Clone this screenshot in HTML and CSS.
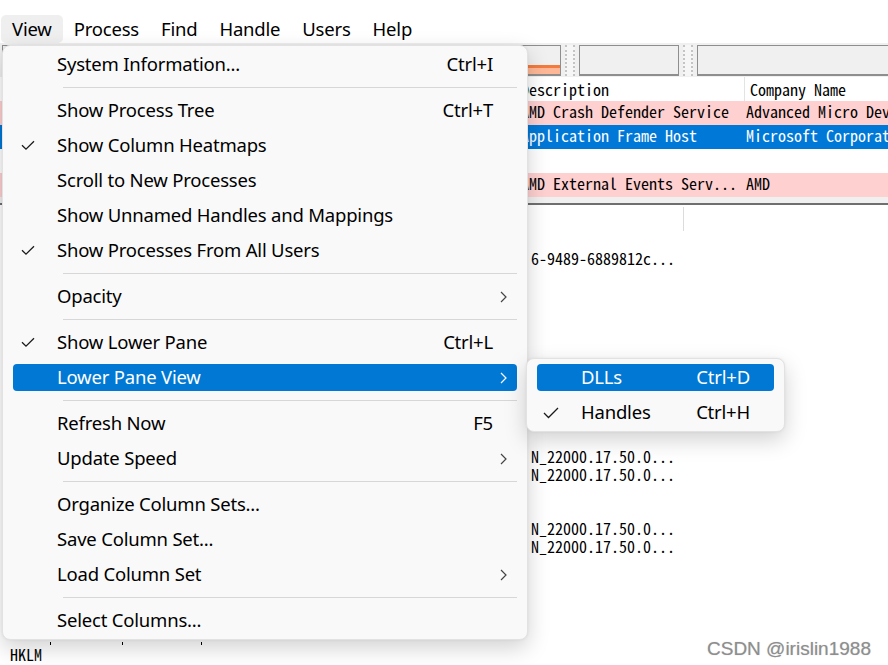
FILE: index.html
```html
<!DOCTYPE html>
<html>
<head>
<meta charset="utf-8">
<link rel="stylesheet" href="styles.css">
</head>
<body>
<div class="window">
  <nav class="menubar">
    <span class="mb-item active">View</span>
    <span class="mb-item">Process</span>
    <span class="mb-item">Find</span>
    <span class="mb-item">Handle</span>
    <span class="mb-item">Users</span>
    <span class="mb-item">Help</span>
  </nav>
  <div class="toolbar">
    <div class="tb-box tb-cpu"><div class="graph"></div></div>
    <div class="grip"><div class="grip-in"></div></div>
    <div class="tb-box tb-mid"></div>
    <div class="grip"><div class="grip-in"></div></div>
    <div class="tb-box tb-last"></div>
  </div>
  <div class="ptable">
    <div class="prow phead"><span></span><span class="c-desc">Description</span><span class="c-comp">Company Name</span></div>
    <div class="prow pink"><span></span><span class="c-desc">AMD Crash Defender Service</span><span class="c-comp">Advanced Micro Dev</span></div>
    <div class="prow sel"><span></span><span class="c-desc">Application Frame Host</span><span class="c-comp">Microsoft Corporat</span></div>
    <div class="prow"><span></span><span class="c-desc"></span><span class="c-comp"></span></div>
    <div class="prow pink"><span></span><span class="c-desc">AMD External Events Serv...</span><span class="c-comp">AMD</span></div>
  </div>
  <div class="splitter"></div>
  <div class="lower">
    <div class="lhead"><span class="lh-cell"></span><span></span></div>
    <div class="lrow"></div>
    <div class="lrow"><span class="ltext">6-9489-6889812c...</span></div>
    <div class="lrow"></div>
    <div class="lrow"></div>
    <div class="lrow"></div>
    <div class="lrow"></div>
    <div class="lrow"></div>
    <div class="lrow"></div>
    <div class="lrow"></div>
    <div class="lrow"></div>
    <div class="lrow"></div>
    <div class="lrow"></div>
    <div class="lrow"><span class="ltext">N_22000.17.50.0...</span></div>
    <div class="lrow"><span class="ltext">N_22000.17.50.0...</span></div>
    <div class="lrow"></div>
    <div class="lrow"></div>
    <div class="lrow"><span class="ltext">N_22000.17.50.0...</span></div>
    <div class="lrow"><span class="ltext">N_22000.17.50.0...</span></div>
    <div class="lrow"></div>
    <div class="lrow"></div>
    <div class="lrow"></div>
    <div class="lrow"></div>
    <div class="lrow ticks"><i class="t1"></i><i class="t2"></i><i class="t3"></i></div>
    <div class="lrow"><span class="key">HKLM</span></div>
  </div>
</div>

<div class="menu main-menu">
  <div class="mi"><div class="mi-in"><span class="ck"></span><span class="lbl">System Information...</span><span class="sc">Ctrl+I</span><span class="ar"></span></div></div>
  <div class="sep"></div>
  <div class="mi"><div class="mi-in"><span class="ck"></span><span class="lbl">Show Process Tree</span><span class="sc">Ctrl+T</span><span class="ar"></span></div></div>
  <div class="mi"><div class="mi-in"><span class="ck"><svg width="14" height="11" viewBox="0 0 14 11"><path d="M1 5.2 L5 9.2 L13 1.2" fill="none" stroke="#1a1a1a" stroke-width="1.3"/></svg></span><span class="lbl">Show Column Heatmaps</span><span class="sc"></span><span class="ar"></span></div></div>
  <div class="mi"><div class="mi-in"><span class="ck"></span><span class="lbl">Scroll to New Processes</span><span class="sc"></span><span class="ar"></span></div></div>
  <div class="mi"><div class="mi-in"><span class="ck"></span><span class="lbl">Show Unnamed Handles and Mappings</span><span class="sc"></span><span class="ar"></span></div></div>
  <div class="mi"><div class="mi-in"><span class="ck"><svg width="14" height="11" viewBox="0 0 14 11"><path d="M1 5.2 L5 9.2 L13 1.2" fill="none" stroke="#1a1a1a" stroke-width="1.3"/></svg></span><span class="lbl">Show Processes From All Users</span><span class="sc"></span><span class="ar"></span></div></div>
  <div class="sep"></div>
  <div class="mi"><div class="mi-in"><span class="ck"></span><span class="lbl">Opacity</span><span class="sc"></span><span class="ar"><svg width="7" height="12" viewBox="0 0 7 12"><path d="M1 1 L6 6 L1 11" fill="none" stroke="#444" stroke-width="1.2"/></svg></span></div></div>
  <div class="sep"></div>
  <div class="mi"><div class="mi-in"><span class="ck"><svg width="14" height="11" viewBox="0 0 14 11"><path d="M1 5.2 L5 9.2 L13 1.2" fill="none" stroke="#1a1a1a" stroke-width="1.3"/></svg></span><span class="lbl">Show Lower Pane</span><span class="sc">Ctrl+L</span><span class="ar"></span></div></div>
  <div class="mi hot"><div class="mi-in"><span class="ck"></span><span class="lbl">Lower Pane View</span><span class="sc"></span><span class="ar"><svg width="7" height="12" viewBox="0 0 7 12"><path d="M1 1 L6 6 L1 11" fill="none" stroke="#fff" stroke-width="1.2"/></svg></span></div></div>
  <div class="sep"></div>
  <div class="mi"><div class="mi-in"><span class="ck"></span><span class="lbl">Refresh Now</span><span class="sc">F5</span><span class="ar"></span></div></div>
  <div class="mi"><div class="mi-in"><span class="ck"></span><span class="lbl">Update Speed</span><span class="sc"></span><span class="ar"><svg width="7" height="12" viewBox="0 0 7 12"><path d="M1 1 L6 6 L1 11" fill="none" stroke="#444" stroke-width="1.2"/></svg></span></div></div>
  <div class="sep"></div>
  <div class="mi"><div class="mi-in"><span class="ck"></span><span class="lbl">Organize Column Sets...</span><span class="sc"></span><span class="ar"></span></div></div>
  <div class="mi"><div class="mi-in"><span class="ck"></span><span class="lbl">Save Column Set...</span><span class="sc"></span><span class="ar"></span></div></div>
  <div class="mi"><div class="mi-in"><span class="ck"></span><span class="lbl">Load Column Set</span><span class="sc"></span><span class="ar"><svg width="7" height="12" viewBox="0 0 7 12"><path d="M1 1 L6 6 L1 11" fill="none" stroke="#444" stroke-width="1.2"/></svg></span></div></div>
  <div class="sep"></div>
  <div class="mi"><div class="mi-in"><span class="ck"></span><span class="lbl">Select Columns...</span><span class="sc"></span><span class="ar"></span></div></div>
</div>

<div class="menu sub-menu">
  <div class="mi hot"><div class="mi-in"><span class="ck"></span><span class="lbl">DLLs</span><span class="sc">Ctrl+D</span><span class="ar"></span></div></div>
  <div class="mi"><div class="mi-in"><span class="ck"><svg width="16" height="12" viewBox="0 0 16 12"><path d="M1 6 L5.5 10.5 L15 1" fill="none" stroke="#1a1a1a" stroke-width="1.3"/></svg></span><span class="lbl">Handles</span><span class="sc">Ctrl+H</span><span class="ar"></span></div></div>
</div>

<div class="watermark">CSDN @irislin1988</div>
</body>
</html>
```

FILE: styles.css
```css
* { box-sizing: border-box; }

body {
  margin: 0;
  width: 888px;
  height: 665px;
  overflow: hidden;
  position: relative;
  background: #fff;
  font-family: "Noto Sans", "Open Sans", sans-serif;
  color: #000;
}

.window {
  display: flex;
  flex-direction: column;
  width: 888px;
}

/* menu bar */
.menubar {
  display: flex;
  height: 43px;
  padding: 15px 0 0 1px;
}
.mb-item {
  height: 28px;
  line-height: 27px;
  padding: 0 11px;
  font-size: 18.5px;
  letter-spacing: -0.2px;
  border-radius: 5px;
}
.mb-item.active { background: #efefef; }

/* toolbar */
.toolbar {
  height: 34px;
  background: #f0f0f0;
  display: flex;
  padding: 2px 0 1px 2px;
}
.tb-box {
  border: 1px solid #8e8e8e;
  border-bottom-width: 2px;
  background: #f0f0f0;
  display: flex;
  flex-direction: column;
  justify-content: flex-end;
}
.tb-cpu { width: 559px; }
.tb-mid { width: 100px; }
.tb-last { flex: 1; border-right: none; }
.graph {
  height: 9px;
  border-top: 3px solid #f37b3d;
  background: #ffb897;
}
.grip {
  width: 18px;
  display: flex;
  justify-content: center;
}
.grip-in {
  width: 10px;
  border-left: 2px dotted #c4c4c4;
  border-right: 2px dotted #c4c4c4;
  background: #f6f6f6;
}

/* process table */
.ptable {
  font-family: "Noto Sans Mono CJK SC", "Liberation Mono", monospace;
  font-size: 16px;
  width: 888px;
}
.prow {
  display: grid;
  grid-template-columns: 521px 223px 144px;
  height: 24px;
  line-height: 18px;
  padding-top: 1px;
  white-space: nowrap;
}
.prow.phead {
  line-height: 24px;
  padding-top: 0;
}
.prow .c-comp { padding-left: 2px; }
.phead .c-comp { padding-left: 5px; border-left: 1px solid #e3e3e3; }
.pink { background: #ffd0d0; }
.sel { background: #0078d7; color: #fff; }

.splitter {
  height: 8px;
  background: #f0f0f0;
  border-bottom: 2px solid #6f6f6f;
}

/* lower pane */
.lower {
  font-family: "Noto Sans Mono CJK SC", "Liberation Mono", monospace;
  font-size: 16px;
}
.lhead {
  height: 26px;
  display: grid;
  grid-template-columns: 684px 1fr;
  padding-top: 2px;
}
.lh-cell { border-right: 1px solid #dcdcdc; }
.lrow {
  height: 18px;
  line-height: 18px;
  white-space: nowrap;
  position: relative;
}
.ltext { padding-left: 531px; }
.key { padding-left: 10px; }
.ticks i {
  position: absolute;
  bottom: 0;
  width: 1px;
  height: 3px;
  background: #000;
}
.ticks .t1 { left: 50px; }
.ticks .t2 { left: 122px; }
.ticks .t3 { left: 201px; }

/* popup menus */
.menu {
  position: absolute;
  background: #f9f9f9;
  border: 1px solid #e2e2e2;
  border-radius: 8px;
  padding: 1px 0;
  box-shadow: 0 8px 22px rgba(0, 0, 0, 0.18), 0 0 3px rgba(0, 0, 0, 0.06);
  font-family: "Noto Sans", "Open Sans", sans-serif;
  font-size: 18.5px;
  letter-spacing: -0.2px;
}
.main-menu {
  left: 2px;
  top: 45px;
  width: 526px;
}
.sub-menu {
  left: 526px;
  top: 358px;
  width: 259px;
  z-index: 2;
}
.mi {
  height: 35px;
  padding: 4px 10px;
}
.mi-in {
  height: 27px;
  padding-bottom: 2px;
  border-radius: 4px;
  display: grid;
  grid-template-columns: 44px 1fr auto 24px;
  align-items: center;
  white-space: nowrap;
}
.hot .mi-in {
  background: #0078d4;
  color: #fff;
}
.ck {
  display: flex;
  align-items: center;
  padding-left: 8px;
  padding-top: 2px;
  height: 25px;
}
.sub-menu .ck { padding-left: 6px; }
.ck svg, .ar svg { display: block; }
.ar {
  display: flex;
  align-items: center;
  padding-left: 7px;
  padding-top: 2px;
  height: 25px;
}
.sep {
  height: 11px;
  margin: 0 10px 0 60px;
  display: flex;
  align-items: center;
}
.sep::before {
  content: "";
  display: block;
  width: 100%;
  height: 1px;
  background: #d7d7d7;
}

.watermark {
  position: absolute;
  left: 707px;
  top: 638px;
  font-family: "Liberation Sans", Arial, sans-serif;
  font-size: 19px;
  line-height: 22px;
  color: #8e8e8e;
  text-shadow: 0 0 1px rgba(80, 80, 80, 0.35);
}
```
